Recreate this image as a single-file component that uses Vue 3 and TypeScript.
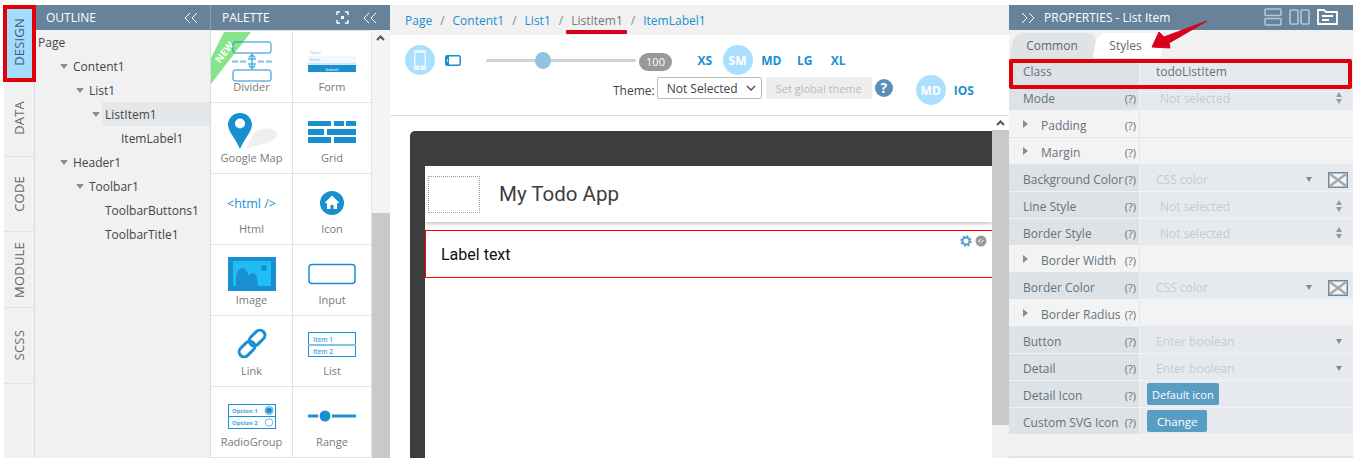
<script setup lang="ts">
const tabs = ['DESIGN', 'DATA', 'CODE', 'MODULE', 'SCSS']
const tree = [
  { t: 'Page', d: 0, arrow: false },
  { t: 'Content1', d: 1, arrow: true },
  { t: 'List1', d: 2, arrow: true },
  { t: 'ListItem1', d: 3, arrow: true, sel: true },
  { t: 'ItemLabel1', d: 4, arrow: false },
  { t: 'Header1', d: 1, arrow: true },
  { t: 'Toolbar1', d: 2, arrow: true },
  { t: 'ToolbarButtons1', d: 3, arrow: false },
  { t: 'ToolbarTitle1', d: 3, arrow: false },
]
const crumbs = ['Page', 'Content1', 'List1', 'ListItem1', 'ItemLabel1']
type Row = { l: string; kind: string; v?: string; exp?: boolean }
const rows: Row[] = [
  { l: 'Mode', kind: 'spin', v: 'Not selected' },
  { l: 'Padding', kind: 'none', exp: true },
  { l: 'Margin', kind: 'none', exp: true },
  { l: 'Background Color', kind: 'color', v: 'CSS color' },
  { l: 'Line Style', kind: 'spin', v: 'Not selected' },
  { l: 'Border Style', kind: 'spin', v: 'Not selected' },
  { l: 'Border Width', kind: 'none', exp: true },
  { l: 'Border Color', kind: 'color', v: 'CSS color' },
  { l: 'Border Radius', kind: 'none', exp: true },
  { l: 'Button', kind: 'drop', v: 'Enter boolean' },
  { l: 'Detail', kind: 'drop', v: 'Enter boolean' },
  { l: 'Detail Icon', kind: 'btn', v: 'Default icon' },
  { l: 'Custom SVG Icon', kind: 'btn', v: 'Change' },
]
const indent = (d: number) => (d === 0 ? 0 : d * 16 + 19) + 'px'
</script>

<template>
  <div class="app">
    <nav class="tabs">
      <div v-for="(t, i) in tabs" :key="t" class="tab" :class="{ active: i === 0 }"><span>{{ t }}</span></div>
    </nav>

    <section class="outline">
      <header class="bar"><span>OUTLINE</span>
        <svg class="chev" width="16" height="12" viewBox="0 0 16 12"><path d="M7 1 2 6l5 5M14 1 9 6l5 5" fill="none" stroke="#fff" stroke-width="1"/></svg>
      </header>
      <ul class="tree">
        <li v-for="n in tree" :key="n.t" class="node" :class="{ sel: n.sel }" :style="{ marginLeft: indent(n.d) }">
          <i v-if="n.arrow" class="tri"></i>{{ n.t }}
        </li>
      </ul>
    </section>

    <section class="palette">
      <header class="bar"><span>PALETTE</span>
        <svg class="fit" width="13" height="13" viewBox="0 0 13 13"><path d="M1 4V1h3M9 1h3v3M12 9v3H9M4 12H1V9" fill="none" stroke="#fff" stroke-width="1.4"/><rect x="5" y="5" width="3" height="3" fill="#fff"/></svg>
        <svg class="chev" width="16" height="12" viewBox="0 0 16 12"><path d="M7 1 2 6l5 5M14 1 9 6l5 5" fill="none" stroke="#fff" stroke-width="1"/></svg>
      </header>
      <div class="pal-body">
        <div class="grid">
          <div class="cell">
            <svg class="top" width="50" height="42" viewBox="0 0 50 42"><rect x="6" y="1" width="38" height="11" rx="2" fill="none" stroke="#1a8fd0"/><path d="M5 20.500h14M31 20.500h14" stroke="#7cc4ea" stroke-width="2" stroke-dasharray="6 2"/><path d="M25 14v14M22 16.500l3-3 3 3M22 24.500l3 3 3-3M21 18h8M21 23h8" fill="none" stroke="#55b2e4" stroke-width="1.600"/><rect x="6" y="29" width="38" height="11" rx="2" fill="#fff" stroke="#1a8fd0"/></svg>
            <label>Divider</label>
            <div class="ribbon"><b>NEW</b></div>
          </div>
          <div class="cell">
            <svg width="48" height="42" viewBox="0 0 48 42"><rect y="15" width="48" height="7" fill="#f0f8fd"/><text x="2" y="13" class="tiny">Name</text><text x="2" y="20" class="tiny">Email</text><rect y="22" width="48" height="2" fill="#cfe8f6"/><rect y="24" width="48" height="7" fill="#1a8fd0"/><text x="24" y="29.500" class="tiny w" text-anchor="middle">Submit</text></svg>
            <label>Form</label>
          </div>
          <div class="cell">
            <svg width="50" height="42" viewBox="0 0 50 42"><path d="M19 37C30 33 50 30 50 22c0-7-15-7-23-1Z" fill="#efefef"/><path d="M13 1C5.500 1 1 7 1 12.500 1 20 9 27 13 37c4-10 12-17 12-24.500C25 7 20.500 1 13 1Z" fill="#1a8fd0"/><circle cx="13" cy="11.500" r="5" fill="#fff"/></svg>
            <label>Google Map</label>
          </div>
          <div class="cell">
            <svg width="48" height="42" viewBox="0 0 48 42"><g fill="#1a8fd0"><rect y="9" width="23" height="5"/><rect x="26" y="9" width="10" height="5"/><rect x="38" y="9" width="10" height="5"/><rect y="17" width="16" height="6"/><rect x="19" y="17" width="29" height="6"/><rect y="25" width="23" height="6"/><rect x="26" y="25" width="22" height="6"/></g></svg>
            <label>Grid</label>
          </div>
          <div class="cell">
            <div class="html">&lt;html /&gt;</div>
            <label>Html</label>
          </div>
          <div class="cell">
            <svg width="48" height="42" viewBox="0 0 48 42"><circle cx="24" cy="20" r="12" fill="#1a8fd0"/><path d="M24 12.500 16.500 20H19v6h3.500v-4h3v4H29v-6h2.500Z" fill="#fff"/></svg>
            <label>Icon</label>
          </div>
          <div class="cell">
            <svg width="48" height="42" viewBox="0 0 48 42"><rect y="3" width="48" height="34" fill="#1a8fd0"/><rect x="5" y="7" width="38" height="25" fill="#1fbcf5"/><path d="M8 37V27c0-9 3-13 6.500-13 3 0 5 3 6 8 1-2 3-3 4.500-3 3 0 5 5 5.500 18Z" fill="#1a8fd0"/><circle cx="36" cy="14" r="3" fill="#1a8fd0"/></svg>
            <label>Image</label>
          </div>
          <div class="cell">
            <svg width="48" height="42" viewBox="0 0 48 42"><rect x="1" y="10.500" width="46" height="19" rx="3" fill="#fff" stroke="#1a8fd0" stroke-width="1.500"/></svg>
            <label>Input</label>
          </div>
          <div class="cell">
            <svg width="48" height="42" viewBox="0 0 48 42"><g fill="none" stroke="#1a8fd0" stroke-width="3"><rect x="24" y="4" width="10" height="18" rx="5" transform="rotate(45 29 13)"/><rect x="14" y="15" width="10" height="18" rx="5" transform="rotate(45 19 24)"/></g></svg>
            <label>Link</label>
          </div>
          <div class="cell">
            <svg width="48" height="42" viewBox="0 0 48 42"><rect x=".5" y="7.500" width="47" height="24" fill="#fff" stroke="#1a8fd0"/><rect y="19" width="48" height="2" fill="#7cc4ea"/><text x="5" y="17" class="mini">Item 1</text><text x="5" y="29" class="mini">Item 2</text></svg>
            <label>List</label>
          </div>
          <div class="cell">
            <svg width="48" height="42" viewBox="0 0 48 42"><rect x=".5" y="8.500" width="47" height="24" fill="#fff" stroke="#1a8fd0"/><rect y="20" width="48" height="1" fill="#1a8fd0"/><text x="4" y="17" class="mini b">Option 1</text><text x="4" y="29" class="mini b">Option 2</text><circle cx="41" cy="14.500" r="3" fill="#1a8fd0"/><circle cx="41" cy="14.500" r="4" fill="none" stroke="#1a8fd0" stroke-width=".8"/><circle cx="41" cy="26.500" r="3.800" fill="#fff" stroke="#1a8fd0" stroke-width=".6"/></svg>
            <label>RadioGroup</label>
          </div>
          <div class="cell">
            <svg width="48" height="42" viewBox="0 0 48 42"><rect y="18.500" width="10" height="3" fill="#1a8fd0"/><rect x="24" y="18.500" width="24" height="3" fill="#1a8fd0"/><circle cx="17" cy="20" r="5.500" fill="#1a8fd0"/></svg>
            <label>Range</label>
          </div>
        </div>
        <div class="pal-scroll">
          <svg width="17" height="14" viewBox="0 0 17 14"><path d="M5 9l3.500-3.500L12 9" fill="none" stroke="#555" stroke-width="2"/></svg>
          <div class="pal-thumb"></div>
        </div>
      </div>
    </section>

    <main class="main">
      <div class="crumbs">
        <template v-for="(c, i) in crumbs" :key="c">
          <span v-if="i > 0" class="sep">/</span>
          <a :class="{ cur: c === 'ListItem1' }">{{ c }}</a>
        </template>
      </div>
      <div class="toolbar">
        <div class="tb-row">
          <span class="circle">
            <svg width="14" height="20" viewBox="0 0 14 20"><rect x="1" y="0" width="12" height="20" rx="2" fill="#eaf7ff"/><rect x="2.500" y="3" width="9" height="12.500" fill="#a9e0ff"/><rect x="6" y="16.500" width="2" height="2" fill="#a9e0ff"/></svg>
          </span>
          <svg class="land" width="16" height="11" viewBox="0 0 16 11"><rect x=".75" y=".75" width="14.500" height="9.500" rx="1.500" fill="#fff" stroke="#1a8fd0" stroke-width="1.500"/><rect x="1" y="1" width="3" height="9" fill="#1a8fd0"/><rect x="2" y="4.500" width="1" height="2" fill="#fff"/></svg>
          <div class="slider"><i></i></div>
          <span class="badge">100</span>
          <div class="sizes">
            <span class="sz">XS</span><span class="circle sz on">SM</span><span class="sz">MD</span><span class="sz">LG</span><span class="sz">XL</span>
          </div>
        </div>
        <div class="tb-row second">
          <span class="theme">Theme:</span>
          <div class="select">Not Selected
            <svg width="10" height="6" viewBox="0 0 10 6"><path d="M1 1l4 4 4-4" fill="none" stroke="#444" stroke-width="1.300"/></svg>
          </div>
          <button class="global">Set global theme</button>
          <span class="help">?</span>
          <span class="circle sz on md">MD</span>
          <span class="sz ios">IOS</span>
        </div>
      </div>
      <div class="canvas">
        <div class="phone">
          <div class="screen">
            <div class="appbar"><div class="slot"></div><div class="title">My Todo App</div></div>
            <div class="item">
              <span>Label text</span>
              <div class="item-tools">
                <svg width="12" height="12" viewBox="0 0 12 12"><circle cx="6" cy="6" r="3.500" fill="none" stroke="#5b9cc4" stroke-width="2"/><circle cx="6" cy="6" r="5" fill="none" stroke="#5b9cc4" stroke-width="1.500" stroke-dasharray="2 1.900"/></svg>
                <svg width="12" height="12" viewBox="0 0 12 12"><circle cx="6" cy="6" r="5.500" fill="#999"/><path d="M3 7l3-3M5 8.500l3.500-3.500" stroke="#fff" stroke-width="1"/></svg>
              </div>
            </div>
          </div>
        </div>
        <div class="can-scroll">
          <svg width="17" height="14" viewBox="0 0 17 14"><path d="M5 9l3.500-3.500L12 9" fill="none" stroke="#555" stroke-width="2"/></svg>
          <div class="can-thumb"></div>
        </div>
      </div>
    </main>

    <aside class="props">
      <header class="bar pbar">
        <svg width="16" height="12" viewBox="0 0 16 12"><path d="M2 1l5 5-5 5M9 1l5 5-5 5" fill="none" stroke="#fff" stroke-width="1"/></svg>
        <span>PROPERTIES - List Item</span>
        <div class="pbar-icons">
          <svg width="18" height="18" viewBox="0 0 18 18"><g fill="none" stroke="#b9c6d0" stroke-width="1.600"><rect x="1" y="1" width="16" height="6.500" rx="1"/><rect x="1" y="10.500" width="16" height="6.500" rx="1"/></g></svg>
          <svg width="21" height="16" viewBox="0 0 21 16"><g fill="none" stroke="#b9c6d0" stroke-width="1.600"><rect x="1" y="1" width="8" height="14" rx="1"/><rect x="12" y="1" width="8" height="14" rx="1"/></g></svg>
          <svg width="21" height="18" viewBox="0 0 21 18"><path d="M1 16V2h6l2 2h11v12Z" fill="none" stroke="#fff" stroke-width="1.800"/><path d="M5 8h11M5 12h7" stroke="#fff" stroke-width="1.800"/></svg>
        </div>
      </header>
      <div class="ptabs">
        <div class="ptab common"><span>Common</span></div>
        <div class="ptab styles"><span>Styles</span></div>
      </div>
      <div class="prow cls"><div class="pl"><span>Class</span></div><div class="pv dark">todoListItem</div></div>
      <div v-for="r in rows" :key="r.l" class="prow" :class="{ exp: r.exp }">
        <div class="pl">
          <i v-if="r.exp" class="rt"></i><span>{{ r.l }}</span><em>(?)</em>
        </div>
        <div class="pv" :class="r.kind">
          <button v-if="r.kind === 'btn'" class="pbtn" :class="{ wide: r.v === 'Change' }">{{ r.v }}</button>
          <template v-else-if="r.v"><span>{{ r.v }}</span></template>
          <svg v-if="r.kind === 'spin'" class="spinner" width="6" height="12" viewBox="0 0 6 12"><path d="M3 0l3 5H0ZM0 7h6l-3 5Z" fill="#999"/></svg>
          <i v-if="r.kind === 'drop' || r.kind === 'color'" class="dn"></i>
          <svg v-if="r.kind === 'color'" class="swatch" width="20" height="16" viewBox="0 0 20 16"><rect x=".75" y=".75" width="18.500" height="14.500" fill="#f3f3f3" stroke="#6e8a9e" stroke-width="1.500"/><path d="M2 2l16 12M18 2 2 14" stroke="#a8a8a8" stroke-width="2.400"/></svg>
        </div>
      </div>
      <div class="pfoot"></div>
    </aside>

    <div class="mark m-design"></div>
    <div class="mark m-class"></div>
    <div class="underline"></div>
    <svg class="arrow" width="70" height="36" viewBox="0 0 70 36"><path d="M3 28 10 13l5 5L58 2 20 24l1 5Z" fill="#d9001b" stroke="#d9001b" stroke-linejoin="round"/></svg>
  </div>
</template>

<style>
body { margin: 0; background: #fff; }
</style>

<style scoped>
.app {
  position: relative;
  width: 1353px;
  height: 458px;
  padding-top: 5px;
  box-sizing: border-box;
  display: flex;
  overflow: hidden;
  background: #fff;
  font-family: "Open Sans", sans-serif;
  font-size: 12px;
  color: #444;
}
.tabs { width: 31px; margin-left: 4px; flex: none; background: #f1f1f1; border-right: 1px solid #d9dde0; box-sizing: border-box; }
.tab { height: 75.800px; border-bottom: 1px solid #dfe2e5; box-sizing: border-box; display: flex; align-items: center; justify-content: center; color: #666; font-size: 13px; }
.tab span { writing-mode: vertical-rl; transform: rotate(180deg); letter-spacing: .2px; }
.tab.active { background: #a4dcff; color: #3d5a6e; }

.bar { height: 25px; background: #66839a; color: #fff; display: flex; align-items: center; padding: 0 11px; box-sizing: border-box; font-size: 12px; }
.bar .chev { margin-left: auto; }
.outline { width: 175px; flex: none; background: #f1f1f1; }
.tree { list-style: none; margin: 0; padding: 0; }
.node { height: 24px; line-height: 26px; padding-left: 3px; font-size: 12px; color: #444; position: relative; white-space: nowrap; }
.node.sel { background: #e4e8eb; }
.tri { position: absolute; left: -10px; top: 10px; border: 4px solid transparent; border-top: 5px solid #8c8c8c; border-bottom: 0; }

.palette { width: 180px; flex: none; border-left: 1px solid #d8dcdf; box-sizing: border-box; display: flex; flex-direction: column; }
.palette .bar { margin-left: -1px; border-left: 1px solid #8ba0b1; padding-left: 11px; }
.palette .bar .fit { margin-left: auto; margin-right: 13px; }
.palette .bar .chev { margin-left: 0; margin-right: 1px; }
.pal-body { display: flex; flex: 1; min-height: 0; }
.grid { width: 161px; padding-top: 2px; display: grid; grid-template-columns: 82px 79px; grid-auto-rows: 71px; flex: none; box-shadow: inset 0 1px 0 #dfe3e6; }
.cell { position: relative; border-right: 1px solid #dfe3e6; border-bottom: 1px solid #dfe3e6; box-sizing: border-box; display: flex; flex-direction: column; align-items: center; padding-top: 9px; overflow: hidden; }
.cell svg { display: block; flex: none; }
.cell svg.top { position: relative; z-index: 1; }
.cell label { position: absolute; left: 0; right: 0; top: 48px; text-align: center; font-size: 11px; color: #7a7a7a; line-height: 14px; }
.tiny { font-family: "Open Sans", sans-serif; font-size: 4px; fill: #8dbcd8; }
.tiny.w { fill: #fff; }
.mini { font-family: "Open Sans", sans-serif; font-size: 6.500px; font-weight: 600; fill: #43a6dd; }
.mini.b { font-weight: 700; font-size: 6px; }
.html { height: 42px; line-height: 42px; font-size: 12.500px; color: #1a8fd0; }
.ribbon { position: absolute; left: 0; top: 0; width: 40px; height: 52px; clip-path: polygon(13px 0, 100% 0, 0 100%, 0 26px); background: #86e58a; }
.ribbon b { position: absolute; left: 1px; top: 14px; width: 24px; text-align: center; color: #fff; font-size: 10px; line-height: 12px; transform: rotate(-52deg); }
.pal-scroll { width: 18px; background: #f4f4f4; display: flex; flex-direction: column; }
.pal-scroll svg { margin-top: 1px; flex: none; }
.pal-thumb { margin-top: auto; height: 245px; background: #c9c9c9; }

.main { width: 619px; flex: none; display: flex; flex-direction: column; }
.crumbs { height: 30px; background: #f1f1f1; display: flex; align-items: center; padding-left: 15px; font-size: 12px; color: #1a8fd0; }
.crumbs .sep { margin: 0 8px; color: #888; }
.crumbs .cur { color: #777; }
.toolbar { height: 81px; border-bottom: 1px solid #ddd; box-sizing: border-box; padding-top: 10px; flex: none; }
.tb-row { height: 30px; display: flex; align-items: center; padding-left: 15px; }
.circle { width: 30px; height: 30px; border-radius: 50%; background: #a9e0ff; display: flex; align-items: center; justify-content: center; flex: none; }
.land { margin-left: 10px; }
.slider { width: 150px; height: 3px; background: #cdd3d8; border-radius: 2px; margin-left: 25px; position: relative; }
.slider i { position: absolute; left: 49px; top: -7px; width: 16px; height: 17px; border-radius: 50%; background: #8fc3e0; }
.badge { margin: 4px 0 0 3px; width: 33px; height: 18px; border-radius: 9px; background: #999; color: #fff; font-size: 11px; text-align: center; line-height: 18px; }
.sizes { display: flex; align-items: center; margin-left: 16px; }
.sz { width: 33.500px; text-align: center; color: #1a8fd0; font-weight: 700; font-size: 12px; }
.sz.on { width: 30px; margin: 0 2px 0 1px; color: #fff; }
.second { padding-left: 223px; margin-top: 0; }
.theme { color: #444; margin-right: 2px; }
.select { width: 105px; height: 22px; box-sizing: border-box; border: 1px solid #bbb; border-radius: 2px; padding-left: 9px; display: flex; align-items: center; justify-content: space-between; padding-right: 5px; color: #444; margin-top: -4px; }
.global { width: 106px; height: 22px; margin: -4px 0 0 4px; padding: 0; border: 0; border-radius: 2px; background: #eee; color: #bbb; font: 11px "Open Sans", sans-serif; }
.help { width: 18px; height: 18px; border-radius: 50%; background: #5b8fb5; color: #fff; font-weight: 700; font-size: 14px; line-height: 18px; text-align: center; margin: -4px 0 0 3px; }
.sz.md { margin: 0 0 0 23px; }
.ios { width: auto; margin-left: 8px; }

.canvas { flex: 1; position: relative; display: flex; min-height: 0; overflow: hidden; }
.phone { flex: 1; margin: 15px 0 0 20px; background: #3d3d3d; border-radius: 5px 0 0 0; padding: 35px 0 0 15px; min-width: 0; }
.screen { background: #fff; height: 400px; }
.appbar { height: 56px; display: flex; align-items: center; box-shadow: 0 2px 3px rgba(0,0,0,.22); }
.slot { width: 52px; height: 37px; margin-left: 3px; box-sizing: border-box; border: 1px dotted #999; }
.title { font-family: Roboto, sans-serif; font-size: 20.500px; color: #3d3d3d; margin-left: 19px; }
.item { position: relative; margin-top: 8px; height: 48px; border: 1px solid #f00; border-right: 0; box-sizing: border-box; display: flex; align-items: center; padding-left: 15px; font-family: Roboto, sans-serif; font-size: 16px; color: #111; }
.item-tools { position: absolute; top: 4px; right: 5px; display: flex; gap: 3px; }
.can-scroll { width: 17px; flex: none; background: #f1f1f1; display: flex; flex-direction: column; }
.can-scroll svg { background: #fff; flex: none; height: 14px; }
.can-thumb { height: 295px; background: #c9c9c9; }

.props { flex: 1; min-width: 0; background: #f1f1f1; position: relative; }
.pbar { padding-left: 11px; gap: 8px; }
.pbar-icons { margin-left: auto; margin-right: 4px; display: flex; align-items: center; gap: 7px; margin-top: -1px; }
.ptabs { height: 28px; display: flex; padding-top: 3px; box-sizing: border-box; }
.ptab { position: relative; height: 25px; display: flex; align-items: center; justify-content: center; color: #666; font-size: 12px; }
.ptab span { position: relative; }
.ptab::before { content: ""; position: absolute; inset: 0; border-radius: 9px 9px 0 0; transform: skewX(-10deg); background: #dfe3e6; }
.common { width: 83px; margin-left: 3px; padding-right: 3px; box-sizing: border-box; }
.styles { width: 68px; margin-left: 0; padding-right: 7px; box-sizing: border-box; }
.styles::before { background: #fff; }
.prow { height: 27px; display: flex; border-bottom: 1px solid #f3f3f3; box-sizing: border-box; color: #66727c; }
.cls { height: 26px; border-bottom: 0; }
.pl { width: 131px; flex: none; background: #dde2e6; border-right: 1px solid #f1f1f1; box-sizing: border-box; display: flex; align-items: center; padding: 2px 0 0 14px; position: relative; white-space: nowrap; font-size: 12px; }
.cls .pl, .cls .pv { padding-top: 0; }
.pl em { position: absolute; right: 3px; top: 7px; font-style: normal; font-size: 11px; }
.pv { flex: 1; background: #e6eaee; display: flex; align-items: center; padding: 2px 0 0 16px; color: #c6cacd; position: relative; font-size: 12px; }
.pv.dark { color: #66727c; }
.pv.spin { padding-left: 20px; }
.exp .pl { background: #f3f3f3; padding-left: 32px; border-right-color: #e3e6e9; }
.exp .pv { background: #f3f3f3; }
.exp { border-bottom: 1px solid #e3e6e9; }
.rt { position: absolute; left: 14px; top: 9px; border: 4.500px solid transparent; border-left: 5px solid #8c8c8c; border-right: 0; }
svg.spinner { position: absolute; right: 11px; top: 8px; }
.dn { position: absolute; right: 11px; top: 12px; border: 3.500px solid transparent; border-top: 5px solid #888; border-bottom: 0; }
.color .dn { right: 41px; }
.swatch { position: absolute; right: 5px; top: 7px; }
.pv.btn { padding: 0 0 0 7px; }
.pbtn { height: 22px; border: 0; border-radius: 2px; background: #5a9dc3; color: #fff; font: 11px "Open Sans", sans-serif; padding: 0 5px; }
.pbtn.wide { padding: 0 10px; font-size: 11.500px; }
.pfoot { position: absolute; left: 0; right: 0; bottom: 0; height: 2px; background: #dfe3e6; }

.mark { position: absolute; border: 4px solid #e00008; box-sizing: border-box; pointer-events: none; }
.m-design { left: 3px; top: 5px; width: 33px; height: 77px; }
.m-class { left: 1009px; top: 59px; width: 343px; height: 30px; border-radius: 2px; }
.underline { position: absolute; left: 566px; top: 30px; width: 61px; height: 4px; border-radius: 1px; background: #d9001b; }
.arrow { position: absolute; left: 1149px; top: 19px; }
</style>
